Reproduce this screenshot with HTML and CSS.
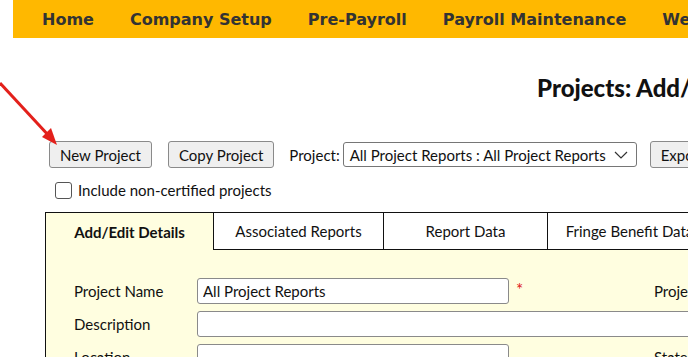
FILE: index.html
```html
<!DOCTYPE html>
<html lang="en">
<head>
    <meta charset="UTF-8">
    <meta name="viewport" content="width=device-width, initial-scale=1.0">
    <title>Projects: Add/Edit Projects</title>
    <link rel="stylesheet" href="styles.css">
</head>
<body>
    <nav class="menu">
        <a href="#">Home</a>
        <a href="#">Company Setup</a>
        <a href="#">Pre-Payroll</a>
        <a href="#">Payroll Maintenance</a>
        <a href="#">Web Reports</a>
    </nav>

    <svg class="pointer" width="70" height="150" viewBox="0 0 70 150">
        <line x1="0" y1="83" x2="50" y2="137" stroke="#e3201b" stroke-width="3"/>
        <polygon points="57,145 42,137 51,128" fill="#e3201b"/>
    </svg>

    <div class="page">
        <h1 class="title">Projects: Add/Edit Projects</h1>

        <div class="toolbar">
            <button type="button" class="btn">New Project</button>
            <button type="button" class="btn">Copy Project</button>
            <label for="project" class="lbl-project">Project:</label>
            <div class="select">
                <span>All Project Reports : All Project Reports</span>
                <svg width="14" height="8" viewBox="0 0 14 8"><polyline points="1,1 7,7 13,1" fill="none" stroke="#333" stroke-width="1.2"/></svg>
            </div>
            <button type="button" class="btn">Export</button>
        </div>

        <label class="check">
            <span class="box"></span>
            Include non-certified projects
        </label>

        <div class="panel">
            <div class="tabs">
                <div class="tab active">Add/Edit Details</div>
                <div class="tab">Associated Reports</div>
                <div class="tab">Report Data</div>
                <div class="tab">Fringe Benefit Data</div>
                <div class="tab-rest"></div>
            </div>

            <div class="form">
                <div class="row">
                    <span class="lbl">Project Name</span>
                    <input type="text" class="field" value="All Project Reports">
                    <span class="req">*</span>
                    <span class="lbl2">Project Number</span>
                </div>
                <div class="row">
                    <span class="lbl">Description</span>
                    <input type="text" class="field wide" value="">
                </div>
                <div class="row">
                    <span class="lbl">Location</span>
                    <input type="text" class="field" value="">
                    <span class="req"></span>
                    <span class="lbl2">State</span>
                </div>
            </div>
        </div>
    </div>
</body>
</html>
```

FILE: styles.css
```css
body {
    margin: 0;
    font-family: Lato, "Open Sans", sans-serif;
    font-size: 15px;
    color: #111;
    background: #fff;
    overflow: hidden;
}
.menu {
    margin-left: 13px;
    height: 38px;
    background: #ffb800;
    display: flex;
    align-items: center;
    gap: 36px;
    padding-left: 29px;
    white-space: nowrap;
    overflow: hidden;
}
.menu a {
    font-family: "DejaVu Sans", Verdana, sans-serif;
    font-weight: bold;
    font-size: 16px;
    color: #333;
    text-decoration: none;
}
.pointer {
    position: absolute;
    left: 0;
    top: 0;
}
.page {
    width: 1400px;
}
.title {
    margin: 35px 0 0 537px;
    font-size: 24px;
    font-weight: 900;
    line-height: 30px;
    white-space: nowrap;
}
.toolbar {
    display: flex;
    align-items: center;
    margin: 38px 0 0 49px;
    height: 27px;
    white-space: nowrap;
}
.btn {
    font-family: inherit;
    font-size: 15px;
    height: 27px;
    padding: 0 10px;
    background: #efefef;
    border: 1px solid #8a8a8a;
    border-radius: 3px;
    color: #111;
    margin-right: 16px;
}
.lbl-project {
    margin-left: -1px;
    margin-right: 3px;
}
.select {
    width: 294px;
    height: 25px;
    border: 1px solid #767676;
    border-radius: 3px;
    display: flex;
    align-items: center;
    justify-content: space-between;
    padding: 0 8px 0 6px;
    box-sizing: border-box;
    margin-right: 13px;
}
.check {
    display: flex;
    align-items: center;
    gap: 6px;
    margin: 13px 0 0 55px;
    height: 18px;
}
.box {
    width: 15px;
    height: 15px;
    border: 1px solid #555;
    border-radius: 3px;
}
.panel {
    margin: 13px 0 0 45px;
    border: 1px solid #111;
    background: #fffee0;
    height: 400px;
}
.tabs {
    display: flex;
    height: 37px;
}
.tab {
    width: 164px;
    border-right: 1px solid #111;
    border-bottom: 1px solid #111;
    background: #fff;
    display: flex;
    align-items: center;
    justify-content: center;
    box-sizing: border-box;
}
.tab.active {
    width: 168px;
    background: #fffee0;
    border-bottom: none;
    font-weight: bold;
}
.tab:nth-child(2) {
    width: 170px;
}
.tab-rest {
    flex: 1;
    border-bottom: 1px solid #111;
}
.form {
    padding: 28px 0 0 28px;
    display: flex;
    flex-direction: column;
    gap: 7px;
}
.row {
    display: flex;
    align-items: center;
    height: 26px;
}
.lbl {
    width: 123px;
}
.field {
    font-family: inherit;
    font-size: 15px;
    width: 312px;
    height: 26px;
    box-sizing: border-box;
    border: 1px solid #8a8a8a;
    border-radius: 3px;
    padding: 0 5px;
    background: #fff;
    color: #111;
}
.field.wide {
    width: 900px;
}
.req {
    color: #e02020;
    width: 145px;
    padding-left: 7px;
    box-sizing: border-box;
    font-size: 17px;
    margin-bottom: 4px;
}
```
